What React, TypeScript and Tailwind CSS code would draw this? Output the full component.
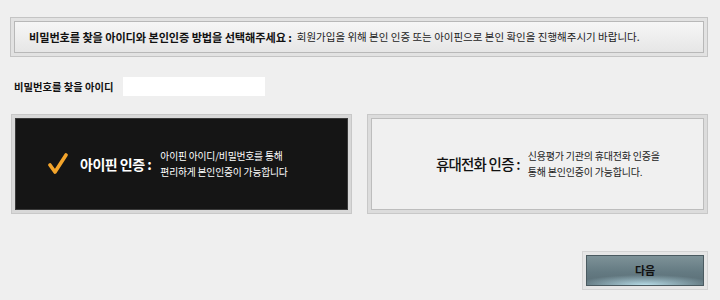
import React from "react";

const font = { fontFamily: '"Noto Sans CJK KR", "Noto Sans", sans-serif' };

export default function App() {
  return (
    <div
      className="w-[720px] h-[300px] bg-[#efefef] overflow-hidden flex flex-col pt-[17px] pl-[10px] pr-[12px]"
      style={font}
    >
      {/* top banner */}
      <div className="h-[40px] border border-[#c4c4c4] bg-[#e2e2e2] p-[3px]">
        <div className="h-full border border-[#b8b8b8] bg-gradient-to-b from-[#f6f6f6] to-[#e6e6e6] flex items-center pl-[14px]">
          <span className="text-[11.2px] font-bold text-[#111] tracking-[-0.1px]">
            비밀번호를 찾을 아이디와 본인인증 방법을 선택해주세요 :
          </span>
          <span className="text-[10.5px] text-[#222] ml-[5px]">
            회원가입을 위해 본인 인증 또는 아이핀으로 본인 확인을 진행해주시기 바랍니다.
          </span>
        </div>
      </div>

      {/* id row */}
      <div className="flex items-center mt-[20px] pl-[4px] h-[19px]">
        <span className="text-[10.3px] font-bold text-[#111] w-[109px]">
          비밀번호를 찾을 아이디
        </span>
        <input className="w-[142px] h-[19px] bg-white outline-none border-0" />
      </div>

      {/* cards */}
      <div className="flex mt-[18px] gap-[15px] pl-[1px]">
        <div className="w-[341px] h-[100px] bg-[#d8d8d8] border border-[#c8c8c8] p-[3px]">
          <div className="h-full bg-[#151515] border border-[#3a3a3a] flex items-center pl-[32px]">
            <svg width="20" height="24" viewBox="0 0 20 24" className="mr-[12px]">
              <path d="M2 13 L7 20 L18 3" fill="none" stroke="#f3a42b" strokeWidth="3.6" strokeLinecap="round" strokeLinejoin="round" />
            </svg>
            <span className="text-[14px] font-bold text-white tracking-[-0.5px]">아이핀 인증 :</span>
            <div className="ml-[9px] text-[9.8px] leading-[16px] text-white tracking-[-0.2px]">
              <div>아이핀 아이디/비밀번호를 통해</div>
              <div>편리하게 본인인증이 가능합니다</div>
            </div>
          </div>
        </div>
        <div className="w-[341px] h-[100px] bg-[#dcdcdc] border border-[#c8c8c8] p-[3px]">
          <div className="h-full bg-[#f0f0f0] border border-[#bdbdbd] flex items-center pl-[64px]">
            <span className="text-[14.5px] text-[#111] tracking-[-0.8px] font-medium">휴대전화 인증 :</span>
            <div className="ml-[8px] text-[10px] leading-[16px] text-[#222] tracking-[-0.2px]">
              <div>신용평가 기관의 휴대전화 인증을</div>
              <div>통해 본인인증이 가능합니다.</div>
            </div>
          </div>
        </div>
      </div>

      {/* button */}
      <div className="flex justify-end mt-[37px]">
        <div className="w-[126px] h-[39px] bg-[#e6e6e6] border border-[#d4d4d4] p-[3px]">
          <button
            className="w-full h-full border border-[#4a5a60] flex items-center justify-center text-[11px] text-[#111] font-bold"
            style={{
              background:
                "radial-gradient(ellipse 60% 35% at 50% 100%, #b6dbe6 0%, rgba(150,190,200,0) 100%), linear-gradient(to bottom, #7e9298 0%, #647a82 55%, #5a6e76 100%)",
            }}
          >
            다음
          </button>
        </div>
      </div>
    </div>
  );
}
